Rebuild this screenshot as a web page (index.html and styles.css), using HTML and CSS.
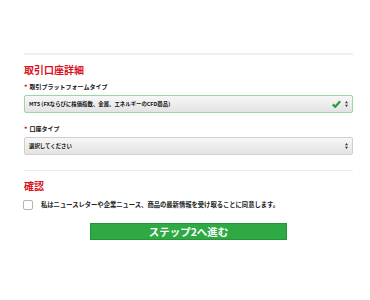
FILE: index.html
```html
<!DOCTYPE html>
<html lang="ja">
<head>
<meta charset="utf-8">
<link rel="stylesheet" href="styles.css">
</head>
<body>
<div class="page">
  <div class="divider thick"></div>
  <h2 class="section-title">取引口座詳細</h2>
  <div class="field">
    <div class="label"><span class="req">*</span>取引プラットフォームタイプ</div>
    <div class="select valid">
      <span class="select-text">MT5 (FXならびに株価指数、金属、エネルギーのCFD商品)</span>
      <svg class="check" width="9" height="8" viewBox="0 0 9 8"><path d="M0.8 4.4 L3.2 6.8 L8.2 1.2" fill="none" stroke="#2a9d3a" stroke-width="2.2"/></svg>
      <svg class="arrows" width="3" height="6" viewBox="0 0 3 6"><path d="M1.5 0 L3 2.2 L0 2.2 Z M1.5 6 L3 3.8 L0 3.8 Z" fill="#333"/></svg>
    </div>
  </div>
  <div class="field second">
    <div class="label"><span class="req">*</span>口座タイプ</div>
    <div class="select">
      <span class="select-text">選択してください</span>
      <svg class="arrows" width="3" height="6" viewBox="0 0 3 6"><path d="M1.5 0 L3 2.2 L0 2.2 Z M1.5 6 L3 3.8 L0 3.8 Z" fill="#333"/></svg>
    </div>
  </div>
  <div class="divider thin"></div>
  <h2 class="section-title confirm">確認</h2>
  <div class="check-row">
    <span class="checkbox"></span>
    <span class="check-text">私はニュースレターや企業ニュース、商品の最新情報を受け取ることに同意します。</span>
  </div>
  <div class="btn-row">
    <div class="btn">ステップ2へ進む</div>
  </div>
</div>
</body>
</html>
```
FILE: styles.css
```css
html, body {
  margin: 0;
  padding: 0;
  background: #ffffff;
}
body {
  font-family: "Noto Sans CJK JP", "Noto Sans", sans-serif;
  color: #111;
}
.page {
  margin-left: 24px;
  width: 329px;
  padding-top: 53px;
}
.divider.thick {
  height: 2px;
  background: #efefef;
}
.divider.thin {
  height: 1px;
  background: #ececec;
  margin-top: 15px;
}
.section-title {
  margin: 9px 0 0 0;
  font-size: 10px;
  line-height: 12px;
  font-weight: 700;
  color: #d9121d;
}
.section-title.confirm {
  margin-top: 9px;
}
.field {
  margin-top: 7px;
}
.field.second {
  margin-top: 12px;
}
.label {
  font-size: 6px;
  line-height: 8px;
  height: 8px;
  font-weight: 700;
  color: #111;
  display: flex;
  align-items: center;
}
.req {
  color: #e0141e;
  font-size: 7px;
  line-height: 8px;
  height: 8px;
  margin-right: 2px;
  display: flex;
  align-items: flex-end;
}
.select {
  margin-top: 4px;
  height: 18px;
  box-sizing: border-box;
  border: 1px solid #cfcfcf;
  border-radius: 2px;
  background: linear-gradient(#f7f7f7, #e3e3e3);
  display: flex;
  align-items: center;
  padding: 0 4px 0 4px;
}
.select.valid {
  border: 1.5px solid #9ad6a6;
}
.select-text {
  flex: 1;
  font-size: 5.4px;
  line-height: 8px;
  font-weight: 700;
  color: #111;
  white-space: nowrap;
}
.check {
  margin-right: 4px;
}
.arrows {
  display: block;
}
.check-row {
  margin-top: 8px;
  margin-left: -1px;
  display: flex;
  align-items: center;
  height: 10px;
  gap: 8px;
}
.checkbox {
  width: 8px;
  height: 8px;
  border: 1px solid #b5b5b5;
  border-radius: 2px;
  background: #fff;
}
.check-text {
  font-size: 6.3px;
  line-height: 8px;
  font-weight: 700;
  color: #222;
  white-space: nowrap;
}
.btn-row {
  margin-top: 13px;
  padding-left: 66px;
}
.btn {
  width: 197px;
  height: 17px;
  box-sizing: border-box;
  background: #2ea944;
  border: 1px solid #219637;
  color: #fff;
  font-size: 10.5px;
  font-weight: 700;
  line-height: 15px;
  text-align: center;
}
```
